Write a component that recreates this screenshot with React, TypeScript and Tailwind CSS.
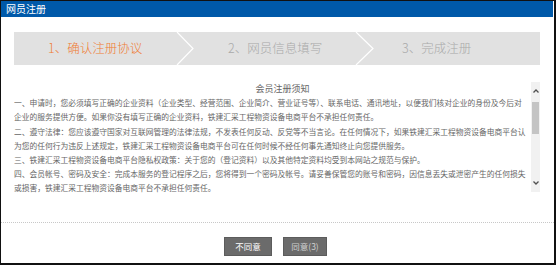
import React from "react";

const lines = [
  "一、申请时，您必须填写正确的企业资料（企业类型、经营范围、企业简介、营业证号等）、联系电话、通讯地址，以便我们核对企业的身份及今后对",
  "企业的服务提供方便。如果你没有填写正确的企业资料，铁建汇采工程物资设备电商平台不承担任何责任。",
  "二、遵守法律：您应该遵守国家对互联网管理的法律法规，不发表任何反动、反党等不当言论。在任何情况下，如果铁建汇采工程物资设备电商平台认",
  "为您的任何行为违反上述规定，铁建汇采工程物资设备电商平台可在任何时候不经任何事先通知终止向您提供服务。",
  "三、铁建汇采工程物资设备电商平台隐私权政策：关于您的（登记资料）以及其他特定资料均受到本网站之规范与保护。",
  "四、会员帐号、密码及安全：完成本服务的登记程序之后，您将得到一个密码及帐号。请妥善保管您的账号和密码，因信息丢失或泄密产生的任何损失",
  "或损害，铁建汇采工程物资设备电商平台不承担任何责任。",
];

export default function App() {
  return (
    <div className="w-[556px] h-[265px] bg-white border-l border-t border-r-2 border-b-2 border-[#111] flex flex-col font-['Noto_Sans_CJK_SC',sans-serif]">
      <div className="h-[16px] mr-[1px] bg-[#0059a9] flex items-center pl-[5px] text-white text-[10px] leading-none">
        网员注册
      </div>

      <div className="mt-[15px] ml-[13px] w-[526px] h-[33px] bg-[#e1e1e1] relative flex items-center text-[12.5px] leading-none font-light">
        <div className="w-[171px] pl-[34px] text-[#f07c33] whitespace-nowrap">1、确认注册协议</div>
        <div className="w-[180px] pl-[43px] text-[#a9a9a9] whitespace-nowrap">2、网员信息填写</div>
        <div className="pl-[37px] text-[#a9a9a9] whitespace-nowrap">3、完成注册</div>
        <svg className="absolute left-0 top-0" width="526" height="33" viewBox="0 0 526 33">
          <polyline points="163,0 179,16.5 163,33" fill="none" stroke="#ffffff" strokeWidth="1.2" />
          <polyline points="342,0 359,16.5 342,33" fill="none" stroke="#ffffff" strokeWidth="1.2" />
        </svg>
      </div>

      <div className="mt-[17px] ml-[13px] w-[526px] h-[111px] flex">
        <div className="flex-1 overflow-hidden text-[7.75px] leading-[14.2px] text-[#666]">
          <div className="text-[9px] text-center pl-[20px]">会员注册须知</div>
          {lines.map((l, i) => (
            <div key={i} className="whitespace-nowrap">{l}</div>
          ))}
        </div>
        <div className="w-[9px] h-[110px] bg-[#f1f1f1] flex flex-col">
          <div className="h-[18px] flex items-center justify-center">
            <svg width="6" height="4" viewBox="0 0 6 4">
              <polyline points="0.5,3.5 3,1 5.5,3.5" fill="none" stroke="#505050" strokeWidth="1.3" />
            </svg>
          </div>
          <div className="h-[2px]" />
          <div className="h-[32px] mx-[1px] bg-[#c4c4c4]" />
          <div className="flex-1" />
          <div className="h-[18px] flex items-center justify-center">
            <svg width="6" height="4" viewBox="0 0 6 4">
              <polyline points="0.5,0.5 3,3 5.5,0.5" fill="none" stroke="#505050" strokeWidth="1.3" />
            </svg>
          </div>
        </div>
      </div>

      <div className="mt-[29px] border-t border-dotted border-[#c8c8c8]" />

      <div className="mt-[14px] flex justify-center gap-[11px] pr-[4px]">
        <div className="w-[48px] h-[19px] bg-[#6b6b6b] border border-[#5c5c5c] text-[8.5px] text-white flex items-center justify-center leading-none">
          不同意
        </div>
        <div className="w-[44px] h-[19px] bg-[#6b6b6b] border border-[#5c5c5c] text-[8.5px] text-[#d0d0d0] flex items-center justify-center leading-none">
          同意(3)
        </div>
      </div>
    </div>
  );
}
